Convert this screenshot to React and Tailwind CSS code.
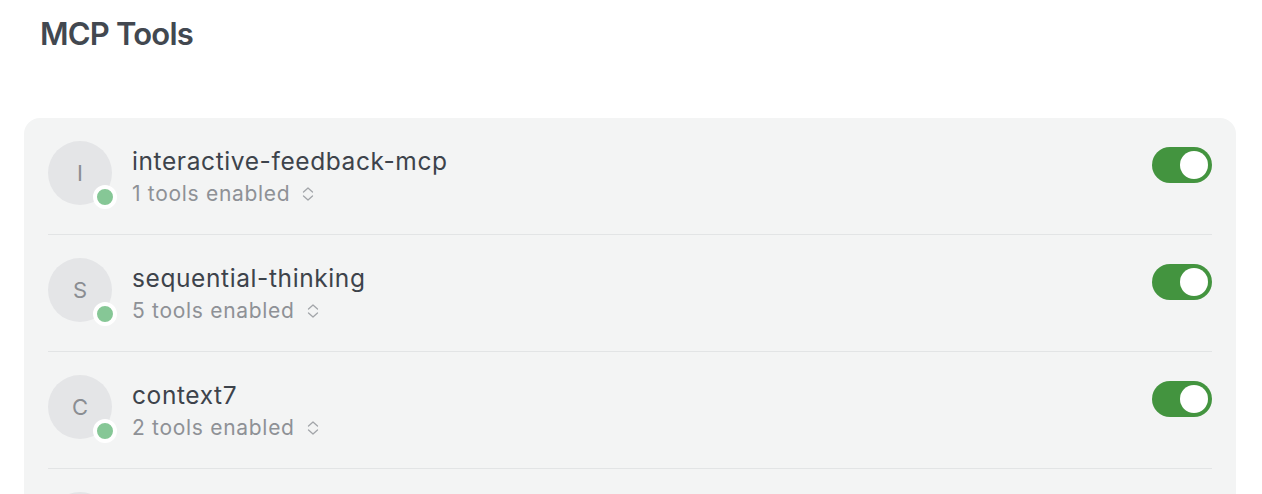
const SERVERS = [
  { letter: 'I', name: 'interactive-feedback-mcp', tools: 1 },
  { letter: 'S', name: 'sequential-thinking', tools: 5 },
  { letter: 'C', name: 'context7', tools: 2 },
  { letter: 'F', name: 'filesystem', tools: 3 },
]

function UpDown() {
  return (
    <svg width="12" height="16" viewBox="0 0 12 16" fill="none" stroke="#a2a5a9" strokeWidth="1.3" strokeLinecap="round" strokeLinejoin="round">
      <path d="M1.5 6 L6 2 L10.5 6" />
      <path d="M1.5 10 L6 14 L10.5 10" />
    </svg>
  )
}

function Toggle() {
  return (
    <div className="flex h-9 w-[60px] shrink-0 items-center justify-end rounded-full bg-[#43943f] p-1">
      <div className="h-7 w-7 rounded-full bg-white" />
    </div>
  )
}

function ServerRow({ server }) {
  return (
    <div className="px-6">
      <div className="flex h-[116px] items-start gap-5 pt-[23px]">
        {/* avatar + status dot */}
        <div className="relative h-16 w-16 shrink-0 rounded-full bg-[#e4e5e7]">
          <div className="flex h-full w-full items-center justify-center text-[22px] text-[#8a8d92]">
            {server.letter}
          </div>
          <span className="absolute -right-[5px] -bottom-1 h-6 w-6 rounded-full border-4 border-white bg-[#86c796]" />
        </div>

        <div className="flex-1 pt-[4px]">
          <p className="text-[24.5px] leading-[32px] tracking-[0.6px] text-[#3d434b]">{server.name}</p>
          <div className="mt-[3px] flex items-center gap-[12px] text-[21px] leading-[28px] tracking-[0.7px] text-[#8e9196]">
            <span>{server.tools} tools enabled</span>
            <UpDown />
          </div>
        </div>

        <div className="pt-[6px]">
          <Toggle />
        </div>
      </div>
      <div className="h-px bg-[#e2e4e5]" />
    </div>
  )
}

export default function App() {
  return (
    <div className="h-screen overflow-hidden bg-white pl-6 pr-[26px] font-['Inter',sans-serif]">
      <h1 className="px-4 pt-[14px] text-[31px] font-semibold leading-[40px] tracking-[-0.8px] text-[#424850]">
        MCP Tools
      </h1>

      <div className="mt-[64px] rounded-2xl bg-[#f3f4f4]">
        {SERVERS.map((s) => (
          <ServerRow key={s.name} server={s} />
        ))}
      </div>
    </div>
  )
}
